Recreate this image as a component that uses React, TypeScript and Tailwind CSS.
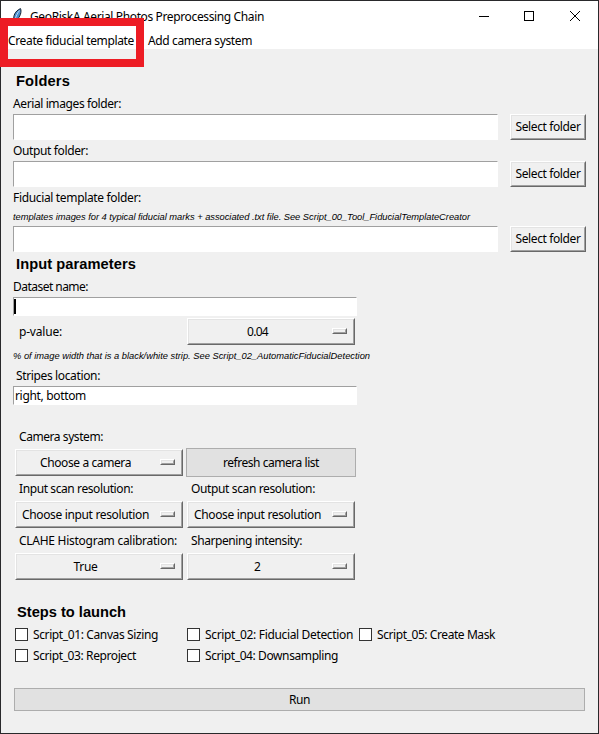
import { useLayoutEffect, useRef } from "react";

type FitProps = { w: number; className?: string; children: string };

/** One line of text whose tracking is tuned so that it spans `w` pixels. */
function Fit({ w, className = "", children }: FitProps) {
  const ref = useRef<HTMLSpanElement>(null);
  useLayoutEffect(() => {
    const el = ref.current;
    if (!el) return;
    el.style.letterSpacing = "0px";
    const natural = el.getBoundingClientRect().width;
    el.style.letterSpacing = `${(w - natural) / children.length}px`;
  }, [w, children]);
  return (
    <span ref={ref} className={`inline-block whitespace-pre ${className}`}>
      {children}
    </span>
  );
}

function Label({ w, className = "", children }: FitProps) {
  return (
    <div className={`flex h-5 items-center ${className}`}>
      <Fit w={w}>{children}</Fit>
    </div>
  );
}

function Heading({ w, className = "", children }: FitProps) {
  return (
    <h2
      className={`flex h-5 items-center font-['Liberation_Sans',Arial,sans-serif] text-[14.67px] font-bold ${className}`}
    >
      <Fit w={w}>{children}</Fit>
    </h2>
  );
}

function Note({ w, className = "", children }: FitProps) {
  return (
    <p
      className={`flex items-center font-['Liberation_Sans',Arial,sans-serif] text-[9.33px] italic ${className}`}
    >
      <Fit w={w}>{children}</Fit>
    </p>
  );
}

const sunken = "border border-t-[#a0a0a0] border-l-[#a0a0a0] border-r-white border-b-white bg-white";

function Raised({ className = "", children }: { className?: string; children: React.ReactNode }) {
  return (
    <button
      className={`block border border-t-white border-l-white border-r-[#696969] border-b-[#696969] ${className}`}
    >
      <span className="flex h-full w-full items-center border border-t-[#e3e3e3] border-l-[#e3e3e3] border-r-[#a0a0a0] border-b-[#a0a0a0]">
        {children}
      </span>
    </button>
  );
}

function FolderRow() {
  return (
    <div className="flex h-[26px] gap-3">
      <div className={`w-[485px] ${sunken}`} />
      <Raised className="h-[26px] w-[76px]">
        <span className="flex w-full justify-center">
          <Fit w={65}>Select folder</Fit>
        </span>
      </Raised>
    </div>
  );
}

function OptionMenu({ label, w }: { label: string; w: number }) {
  return (
    <Raised className="h-[27px] w-[168px]">
      <span className="flex w-[137px] justify-center">
        <Fit w={w}>{label}</Fit>
      </span>
      <span className="mb-[2px] ml-[6px] h-[6px] w-[15px] border border-t-white border-l-white border-r-[#696969] border-b-[#696969]">
        <span className="block h-full w-full border border-t-[#e3e3e3] border-l-[#e3e3e3] border-r-[#a0a0a0] border-b-[#a0a0a0]" />
      </span>
    </Raised>
  );
}

function Check({ label, w }: { label: string; w: number }) {
  return (
    <label className="flex h-[13px] w-[172px] items-center gap-[5px]">
      <span className="h-[13px] w-[13px] border border-[#333] bg-white" />
      <Fit w={w}>{label}</Fit>
    </label>
  );
}

function Feather() {
  return (
    <svg width="12" height="16" viewBox="0 0 12 16">
      <path d="M2 12C1 8 3 3 8.500 .6C9.800 3.500 8.500 9 4 12.500Z" fill="#4a8fd0" stroke="#15202c" strokeWidth="1" />
      <path d="M7.500 2.500C5.500 5 4 8 3 11.500" fill="none" stroke="#b9d4ee" strokeWidth="1" />
      <path d="M3 11L1.500 15.500" stroke="#111" strokeWidth="1" />
    </svg>
  );
}

export default function App() {
  return (
    <div className="relative flex h-[734px] w-[599px] flex-col border border-[#29292b] bg-[#f0f0f0] font-['Noto_Sans','Open_Sans',sans-serif] text-[12px] leading-4 text-black">
      <header className="h-12 bg-white">
        <div className="flex h-[30px] items-center">
          <div className="ml-[11px] w-[18px]">
            <Feather />
          </div>
          <Fit w={234} className="pt-px">GeoRiskA Aerial Photos Preprocessing Chain</Fit>
          <svg className="ml-auto mr-[17px]" width="102" height="12" viewBox="0 0 102 12" fill="none" stroke="#000">
            <path d="M0 6.500H10" />
            <rect x="45.500" y="1.500" width="9" height="9" />
            <path d="M91 1L101 11M101 1L91 11" />
          </svg>
        </div>
        <nav className="flex h-[18px] items-center pt-[2px] pl-[7px]">
          <div className="flex w-[140px]">
            <Fit w={126}>Create fiducial template</Fit>
          </div>
          <Fit w={104}>Add camera system</Fit>
        </nav>
      </header>

      <main className="flex flex-col pl-3">
        <Heading w={54} className="mt-[22px] pl-[3px]">Folders</Heading>
        <Label w={108} className="mt-[3px]">Aerial images folder:</Label>
        <FolderRow />
        <Label w={75} className="mt-px">Output folder:</Label>
        <FolderRow />
        <Label w={128} className="mt-px">Fiducial template folder:</Label>
        <Note w={457} className="h-[18px]">
          templates images for 4 typical fiducial marks + associated .txt file. See Script_00_Tool_FiducialTemplateCreator
        </Note>
        <FolderRow />

        <Heading w={120} className="mt-[2px] pl-[3px]">Input parameters</Heading>
        <Label w={75} className="mt-[3px]">Dataset name:</Label>
        <div className={`flex h-[19px] w-[344px] items-center ${sunken}`}>
          <span className="h-[15px] w-[2px] bg-black" />
        </div>
        <div className="mt-[2px] flex h-[27px] items-center pl-[6px]">
          <div className="flex w-[168px]">
            <Fit w={43}>p-value:</Fit>
          </div>
          <OptionMenu label="0.04" w={21} />
        </div>
        <Note w={357} className="mt-px h-5">
          % of image width that is a black/white strip. See Script_02_AutomaticFiducialDetection
        </Note>
        <Label w={84} className="pl-[3px]">Stripes location:</Label>
        <div className={`flex h-[19px] w-[344px] items-center pl-px ${sunken}`}>
          <Fit w={71}>right, bottom</Fit>
        </div>

        <Label w={84} className="mt-[22px] pl-[6px]">Camera system:</Label>
        <div className="mt-px flex h-[29px] items-center gap-[3px] pl-[2px]">
          <OptionMenu label="Choose a camera" w={91} />
          <button className="flex h-[29px] w-[170px] items-center justify-center border border-[#adadad] bg-[#e1e1e1]">
            <Fit w={96}>refresh camera list</Fit>
          </button>
        </div>
        <div className="mt-[2px] flex pl-[6px]">
          <Label w={114} className="w-[172px]">Input scan resolution:</Label>
          <Label w={124}>Output scan resolution:</Label>
        </div>
        <div className="mt-[2px] flex gap-1 pl-[2px]">
          <OptionMenu label="Choose input resolution" w={127} />
          <OptionMenu label="Choose input resolution" w={127} />
        </div>
        <div className="mt-[3px] flex pl-[6px]">
          <Label w={158} className="w-[172px]">CLAHE Histogram calibration:</Label>
          <Label w={111}>Sharpening intensity:</Label>
        </div>
        <div className="mt-[2px] flex gap-1 pl-[2px]">
          <OptionMenu label="True" w={24} />
          <OptionMenu label="2" w={7} />
        </div>

        <Heading w={109} className="mt-[22px] pl-1">Steps to launch</Heading>
        <div className="mt-[6px] flex pl-[2px]">
          <Check label="Script_01: Canvas Sizing" w={125} />
          <Check label="Script_02: Fiducial Detection" w={148} />
          <Check label="Script_05: Create Mask" w={118} />
        </div>
        <div className="mt-2 flex pl-[2px]">
          <Check label="Script_03: Reproject" w={103} />
          <Check label="Script_04: Downsampling" w={133} />
        </div>
        <button className="mt-[26px] ml-px flex h-[23px] w-[571px] items-center justify-center border border-[#adadad] bg-[#e1e1e1]">
          <Fit w={21}>Run</Fit>
        </button>
      </main>

      <div className="pointer-events-none absolute -left-px top-[17px] h-[49px] w-[144px] border-8 border-[#ed1c24]" />
    </div>
  );
}
